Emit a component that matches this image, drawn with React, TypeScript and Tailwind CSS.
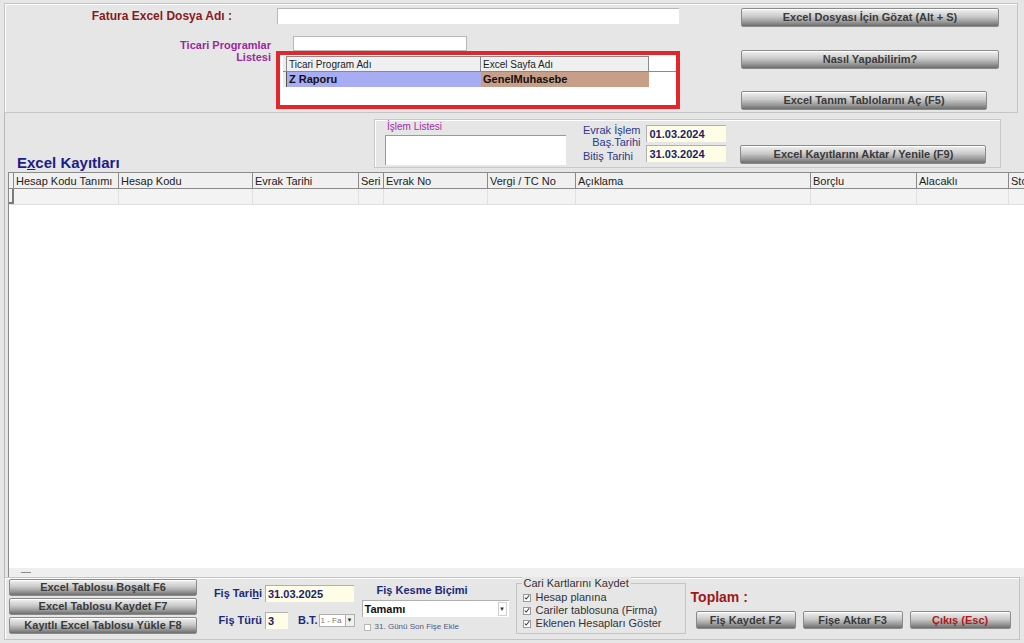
import React from 'react';

const btn =
  "flex items-center justify-center border border-[#8a8a8a] rounded-[2px] bg-[linear-gradient(to_bottom,#f2f2f2_0%,#c9c9c9_45%,#9b9b9b_75%,#6e6e6e_100%)] text-[11px] font-bold text-[#3a3a3a] leading-none shadow-[inset_0_1px_0_#ffffff] whitespace-nowrap";

const Btn = ({ label, className = '', red = false }: { label: string; className?: string; red?: boolean }) => (
  <div className={`${btn} ${red ? 'text-[#b01818]' : ''} ${className}`}>{label}</div>
);

const cols = [
  { name: 'Hesap Kodu Tanımı', w: 105 },
  { name: 'Hesap Kodu', w: 134 },
  { name: 'Evrak Tarihi', w: 106 },
  { name: 'Seri', w: 25 },
  { name: 'Evrak No', w: 104 },
  { name: 'Vergi / TC No', w: 88 },
  { name: 'Açıklama', w: 235 },
  { name: 'Borçlu', w: 106 },
  { name: 'Alacaklı', w: 92 },
  { name: 'Stok Kodu', w: 80 },
];

const Check = ({ label }: { label: string }) => (
  <div className="flex items-center gap-[5px] h-[13px]">
    <span className="w-[8px] h-[8px] border border-[#9a9a9a] bg-white flex items-center justify-center">
      <svg viewBox="0 0 8 8" className="w-[7px] h-[7px]">
        <path d="M1 4 L3 6 L7 1" stroke="#333" strokeWidth="1.4" fill="none" />
      </svg>
    </span>
    <span className="text-[11px] text-[#333]">{label}</span>
  </div>
);

export default function App() {
  return (
    <div className="w-[1024px] h-[643px] bg-[#e6e6e6] font-['Liberation_Sans',Arial,sans-serif] overflow-hidden flex flex-col">
      {/* top panel */}
      <div className="mt-[3px] ml-[4px] mr-[6px] h-[110px] border border-[#c4c4c4] shadow-[inset_1px_1px_0_#ffffff] flex">
        <div className="w-[736px] flex flex-col">
          <div className="flex items-center mt-[4px] h-[16px]">
            <div className="w-[227px] text-right text-[12px] font-bold text-[#8b1a1a]">Fatura Excel Dosya Adı :</div>
            <div className="ml-[45px] w-[402px] h-[16px] bg-white border-t border-l border-[#b8b8b8]" />
          </div>
          <div className="flex mt-[12px]">
            <div className="w-[266px] text-right text-[11px] font-bold text-[#9a2aa0] leading-[12px] pt-[3px]">
              Ticari Programlar
              <br />
              Listesi
            </div>
            <div className="ml-[5px] flex flex-col">
              <div className="ml-[17px] w-[174px] h-[15px] bg-white border border-[#b8b8b8]" />
              <div className="w-[404px] h-[58px] border-[4px] border-[#e3262b] bg-white pt-[1px] pl-[3px]">
                <div className="flex h-[16px] border-b border-[#8a8a8a]">
                  <div className="w-[4px] border-r border-[#8a8a8a] bg-[#ececec]" />
                  <div className="w-[194px] bg-[#f0f0f0] border-r border-t border-[#8a8a8a] text-[10px] text-[#222] pl-[2px] leading-[15px]">Ticari Program Adı</div>
                  <div className="w-[168px] bg-[#f0f0f0] border-r border-t border-[#8a8a8a] text-[10px] text-[#222] pl-[2px] leading-[15px]">Excel Sayfa Adı</div>
                </div>
                <div className="flex h-[15px]">
                  <div className="w-[4px] border-r border-[#555] bg-[#ececec]" />
                  <div className="w-[194px] bg-[#a8acf2] text-[11px] font-bold text-[#111] pl-[2px] leading-[15px]">Z Raporu</div>
                  <div className="w-[168px] bg-[#c79e88] text-[11px] font-bold text-[#111] pl-[2px] leading-[15px]">GenelMuhasebe</div>
                </div>
              </div>
            </div>
          </div>
        </div>
        <div className="flex flex-col pt-[4px]">
          <Btn label="Excel Dosyası İçin Gözat (Alt + S)" className="w-[258px] h-[19px]" />
          <Btn label="Nasıl Yapabilirim?" className="w-[258px] h-[19px] mt-[23px]" />
          <Btn label="Excel Tanım Tablolarını Aç (F5)" className="w-[246px] h-[19px] mt-[22px]" />
        </div>
      </div>

      {/* middle */}
      <div className="flex h-[59px] ml-[4px] border-l border-[#b8b8b8]">
        <div className="w-[369px] flex items-end pl-[12px] pb-[2px]">
          <div className="text-[15px] font-bold text-[#1c1c8a] leading-none">
            E<span className="underline">x</span>cel Kayıtları
          </div>
        </div>
        <div className="mt-[6px] h-[49px] w-[627px] border border-[#c8c8c8] shadow-[inset_1px_1px_0_#ffffff] flex">
          <div className="ml-[10px] flex flex-col">
            <div className="text-[10px] text-[#a72aa8] leading-[12px] mt-[1px] ml-[2px]">İşlem Listesi</div>
            <div className="w-[181px] h-[30px] bg-white border-t border-l border-[#9a9a9a] mt-[2px]" />
          </div>
          <div className="ml-[17px] mt-[4px] text-[11px] text-[#2a3a8c] leading-[12px] text-right">
            <div>Evrak İşlem</div>
            <div>Baş.Tarihi</div>
            <div className="text-left mt-[2px]">Bitiş Tarihi</div>
          </div>
          <div className="ml-[6px] mt-[5px] flex flex-col gap-[3px]">
            <div className="w-[80px] h-[17px] bg-[#fffde6] border-t border-l border-[#b0b0b0] text-[11px] font-bold text-[#1c1c6a] pl-[2px] leading-[16px]">01.03.2024</div>
            <div className="w-[80px] h-[17px] bg-[#fffde6] border-t border-l border-[#b0b0b0] text-[11px] font-bold text-[#1c1c6a] pl-[2px] leading-[16px]">31.03.2024</div>
          </div>
          <div className="ml-[14px] mt-[25px]">
            <Btn label="Excel Kayıtlarını Aktar / Yenile (F9)" className="w-[246px] h-[19px]" />
          </div>
        </div>
      </div>

      {/* grid */}
      <div className="flex-1 flex ml-[4px] border-l border-[#b8b8b8]">
        <div className="ml-[3px] flex-1 flex flex-col bg-white border-l border-[#8a8a8a] overflow-hidden">
          <div className="flex h-[17px] bg-[#f0f0f0] border-t border-b border-[#8a8a8a]">
            <div className="w-[5px] shrink-0 border-r border-[#8a8a8a]" />
            {cols.map((c) => (
              <div
                key={c.name}
                style={{ width: c.w }}
                className="shrink-0 border-r border-[#8a8a8a] text-[11px] text-[#222] pl-[2px] leading-[16px] whitespace-nowrap overflow-hidden"
              >
                {c.name}
              </div>
            ))}
          </div>
          <div className="flex h-[16px] bg-[#f3f3f3] border-b border-[#e0e0e0]">
            <div className="w-[5px] shrink-0 border-r-2 border-b-2 border-[#7a7a7a]" />
            {cols.map((c) => (
              <div key={c.name} style={{ width: c.w }} className="shrink-0 border-r border-[#e0e0e0]" />
            ))}
          </div>
          <div className="flex-1" />
          <div className="h-[9px] bg-[#efefef] flex items-center pl-[12px]">
            <div className="w-[10px] h-[1px] bg-[#8a8a8a]" />
          </div>
        </div>
      </div>

      {/* bottom panel */}
      <div className="h-[63px] ml-[4px] mr-[4px] mb-[3px] border border-[#c4c4c4] shadow-[inset_1px_1px_0_#ffffff] flex">
        <div className="ml-[4px] mt-[1px] flex flex-col gap-[2px]">
          <Btn label="Excel Tablosu Boşalt F6" className="w-[188px] h-[17px]" />
          <Btn label="Excel Tablosu Kaydet F7" className="w-[188px] h-[17px]" />
          <Btn label="Kayıtlı Excel Tablosu Yükle F8" className="w-[188px] h-[17px]" />
        </div>
        <div className="ml-[10px] mt-[7px] flex flex-col">
          <div className="flex items-center">
            <div className="w-[55px] text-right text-[11px] font-bold text-[#1c2a7a] whitespace-nowrap">
              Fiş Tari<span className="underline">h</span>i
            </div>
            <div className="ml-[3px] w-[89px] h-[17px] bg-[#fffde6] border-t border-l border-[#b0b0b0] text-[11px] font-bold text-[#1c1c6a] pl-[2px] leading-[16px]">31.03.2025</div>
          </div>
          <div className="flex items-center mt-[10px]">
            <div className="w-[55px] text-right text-[11px] font-bold text-[#1c2a7a] whitespace-nowrap">Fiş Türü</div>
            <div className="ml-[3px] w-[23px] h-[17px] bg-[#fffde6] border-t border-l border-[#b0b0b0] text-[11px] font-bold text-[#1c1c6a] pl-[2px] leading-[16px]">3</div>
            <div className="ml-[10px] text-[11px] font-bold text-[#1c2a7a] whitespace-nowrap">B.T.</div>
            <div className="ml-[1px] w-[36px] h-[13px] bg-white border border-[#b0b0b0] flex items-center">
              <span className="flex-1 text-[8px] text-[#777] pl-[1px] leading-none whitespace-nowrap">1 - Fa</span>
              <span className="w-[9px] h-[11px] border-l border-[#b0b0b0] bg-[#f0f0f0] flex items-center justify-center text-[6px] text-[#333]">▼</span>
            </div>
          </div>
        </div>
        <div className="ml-[7px] mt-[6px] flex flex-col">
          <div className="ml-[15px] text-[11px] font-bold text-[#1c2a7a] leading-[13px]">Fiş Kesme Biçimi</div>
          <div className="mt-[3px] w-[147px] h-[17px] bg-white border-t border-l border-[#b0b0b0] flex items-center">
            <span className="flex-1 text-[11px] font-bold text-[#111] pl-[2px]">Tamamı</span>
            <span className="w-[9px] h-[14px] mr-[2px] bg-white flex items-center justify-center text-[6px] text-[#333] border border-[#d0d0d0]">▼</span>
          </div>
          <div className="mt-[4px] ml-[2px] flex items-center gap-[4px]">
            <span className="w-[7px] h-[7px] border border-[#b8b8b8] bg-white" />
            <span className="text-[8px] text-[#555a80]">31. Günü Son Fişe Ekle</span>
          </div>
        </div>
        <div className="ml-[7px] mt-[5px] w-[170px] h-[51px] border border-[#c4c4c4] relative pl-[6px] pt-[7px]">
          <div className="absolute -top-[7px] left-[5px] bg-[#e6e6e6] px-[2px] text-[11px] text-[#333] leading-[13px]">Cari Kartlarını Kaydet</div>
          <Check label="Hesap planına" />
          <Check label="Cariler tablosuna (Firma)" />
          <Check label="Eklenen Hesapları Göster" />
        </div>
        <div className="ml-[5px] flex flex-col">
          <div className="mt-[12px] text-[14px] font-bold text-[#a01818] leading-none">Toplam :</div>
          <div className="mt-[7px] ml-[5px] flex gap-[7px]">
            <Btn label="Fiş Kaydet F2" className="w-[100px] h-[18px]" />
            <Btn label="Fişe Aktar F3" className="w-[100px] h-[18px]" />
            <Btn label="Çıkış (Esc)" className="w-[101px] h-[18px]" red />
          </div>
        </div>
      </div>
    </div>
  );
}
